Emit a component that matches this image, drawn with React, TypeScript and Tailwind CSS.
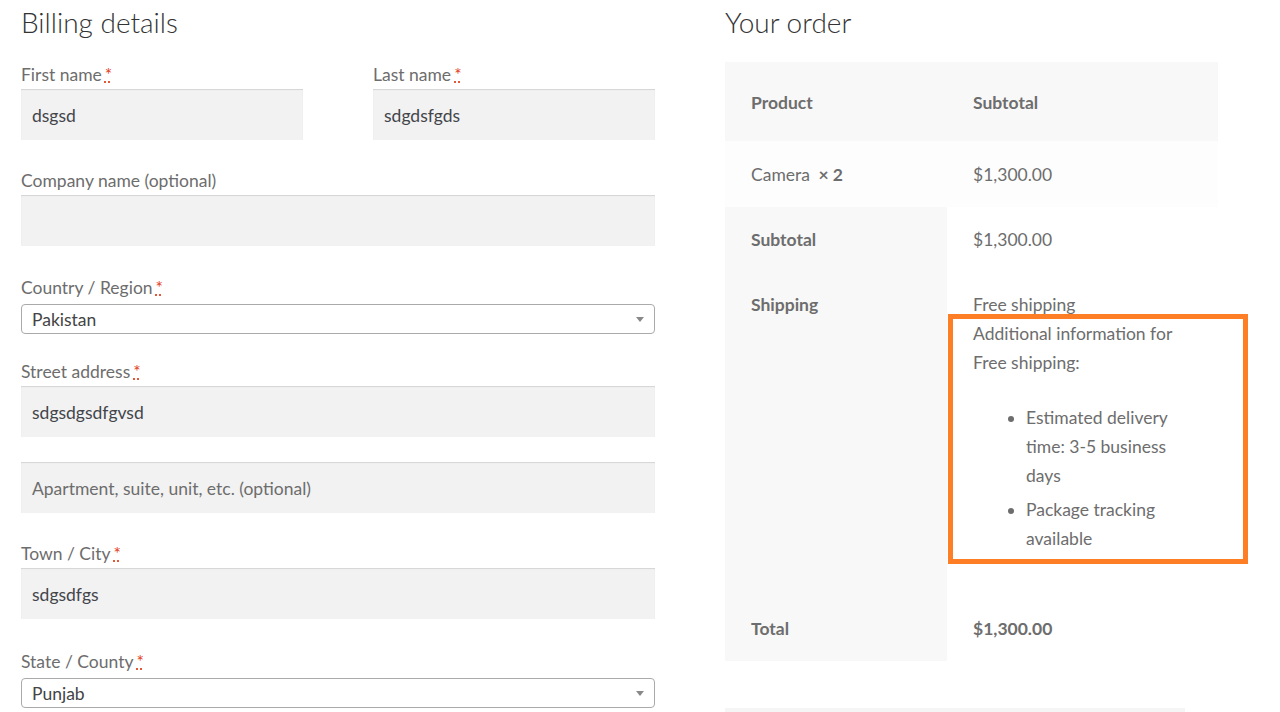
import React from "react"

const font = { fontFamily: "Lato, 'Liberation Sans', sans-serif" }

function Req() {
  return (
    <abbr title="required" className="text-[#e2401c] underline decoration-dotted ml-[3px]">
      *
    </abbr>
  )
}

function Label({ text, required }: { text: string; required?: boolean }) {
  return (
    <label className="block h-[29px] leading-[29px] text-[17.5px] text-[#6d6d6d]">
      {text}
      {required && <Req />}
    </label>
  )
}

function TextInput({ value, placeholder }: { value?: string; placeholder?: string }) {
  return (
    <div className="w-full h-[51px] bg-[#f2f2f2] shadow-[inset_0_1px_1px_rgba(0,0,0,0.125)] px-[11px] pt-[3px] flex items-center text-[17.5px]">
      {value ? (
        <span className="text-[#43454b]">{value}</span>
      ) : (
        <span className="text-[#6d6d6d]">{placeholder}</span>
      )}
    </div>
  )
}

function Select({ value }: { value: string }) {
  return (
    <div className="mt-[2px] h-[30px] border border-[#aaa] rounded-[4px] bg-white flex items-center justify-between px-[10px] text-[17.5px] text-[#444]">
      <span className="pt-[3px]">{value}</span>
      <span className="w-0 h-0 border-l-[4px] border-r-[4px] border-t-[5px] border-l-transparent border-r-transparent border-t-[#888]" />
    </div>
  )
}

export default function App() {
  return (
    <div className="min-h-screen bg-white pl-[21px] flex gap-[70px]" style={font}>
      {/* Billing */}
      <div className="w-[634px]">
        <h3 className="text-[28px] leading-[44px] font-light text-[#333]">Billing details</h3>

        <div className="mt-[16px] flex justify-between">
          <div className="w-[282px]">
            <Label text="First name" required />
            <TextInput value="dsgsd" />
          </div>
          <div className="w-[282px]">
            <Label text="Last name" required />
            <TextInput value="sdgdsfgds" />
          </div>
        </div>

        <div className="mt-[26px]">
          <Label text="Company name (optional)" />
          <TextInput />
        </div>

        <div className="mt-[27px]">
          <Label text="Country / Region" required />
          <Select value="Pakistan" />
        </div>

        <div className="mt-[23px]">
          <Label text="Street address" required />
          <TextInput value="sdgsdgsdfgvsd" />
        </div>

        <div className="mt-[25px]">
          <TextInput placeholder="Apartment, suite, unit, etc. (optional)" />
        </div>

        <div className="mt-[26px]">
          <Label text="Town / City" required />
          <TextInput value="sdgsdfgs" />
        </div>

        <div className="mt-[28px]">
          <Label text="State / County" required />
          <Select value="Punjab" />
        </div>
      </div>

      {/* Order review */}
      <div className="w-[493px]">
        <h3 className="text-[28px] leading-[44px] font-light text-[#333]">Your order</h3>

        <table className="mt-[18px] w-full table-fixed border-collapse text-[17.5px] leading-[29px] text-[#6d6d6d]">
          <colgroup>
            <col className="w-[222px]" />
            <col />
          </colgroup>
          <thead>
            <tr className="bg-[#f8f8f8]">
              <th className="text-left font-bold px-[26px] pt-[26px] pb-[24px]">Product</th>
              <th className="text-left font-bold px-[26px] pt-[26px] pb-[24px]">Subtotal</th>
            </tr>
          </thead>
          <tbody>
            <tr className="bg-[#fdfdfd]">
              <td className="px-[26px] pt-[19px] pb-[18px]">
                Camera <strong className="ml-[4px] font-bold">× 2</strong>
              </td>
              <td className="px-[26px] pt-[19px] pb-[18px]">$1,300.00</td>
            </tr>
          </tbody>
          <tfoot>
            <tr>
              <th className="bg-[#f8f8f8] text-left align-top font-bold px-[26px] py-[18px]">Subtotal</th>
              <td className="px-[26px] py-[18px] align-top">$1,300.00</td>
            </tr>
            <tr>
              <th className="bg-[#f8f8f8] text-left align-top font-bold px-[26px] pt-[18px]">Shipping</th>
              <td className="relative px-[26px] pt-[18px] pb-[18px] align-top">
                <div>Free shipping</div>
                <div>
                  Additional information for
                  <br />
                  Free shipping:
                </div>
                <ul className="list-disc ml-[53px] mt-[26px] mb-[24px] marker:text-[#6d6d6d]">
                  <li className="mb-[5px]">
                    Estimated delivery
                    <br />
                    time: 3-5 business
                    <br />
                    days
                  </li>
                  <li>
                    Package tracking
                    <br />
                    available
                  </li>
                </ul>
                <div className="absolute left-[1px] top-[42px] w-[300px] h-[250px] border-[5px] border-[#fd7e24]" />
              </td>
            </tr>
            <tr>
              <th className="bg-[#f8f8f8] text-left align-top font-bold px-[26px] pt-[19px] pb-[18px]">Total</th>
              <td className="px-[26px] pt-[19px] pb-[18px] align-top">
                <strong className="font-bold">$1,300.00</strong>
              </td>
            </tr>
          </tfoot>
        </table>

        <div className="mt-[47px] w-[460px] h-[10px] bg-[#f5f5f5]" />
      </div>
    </div>
  )
}
